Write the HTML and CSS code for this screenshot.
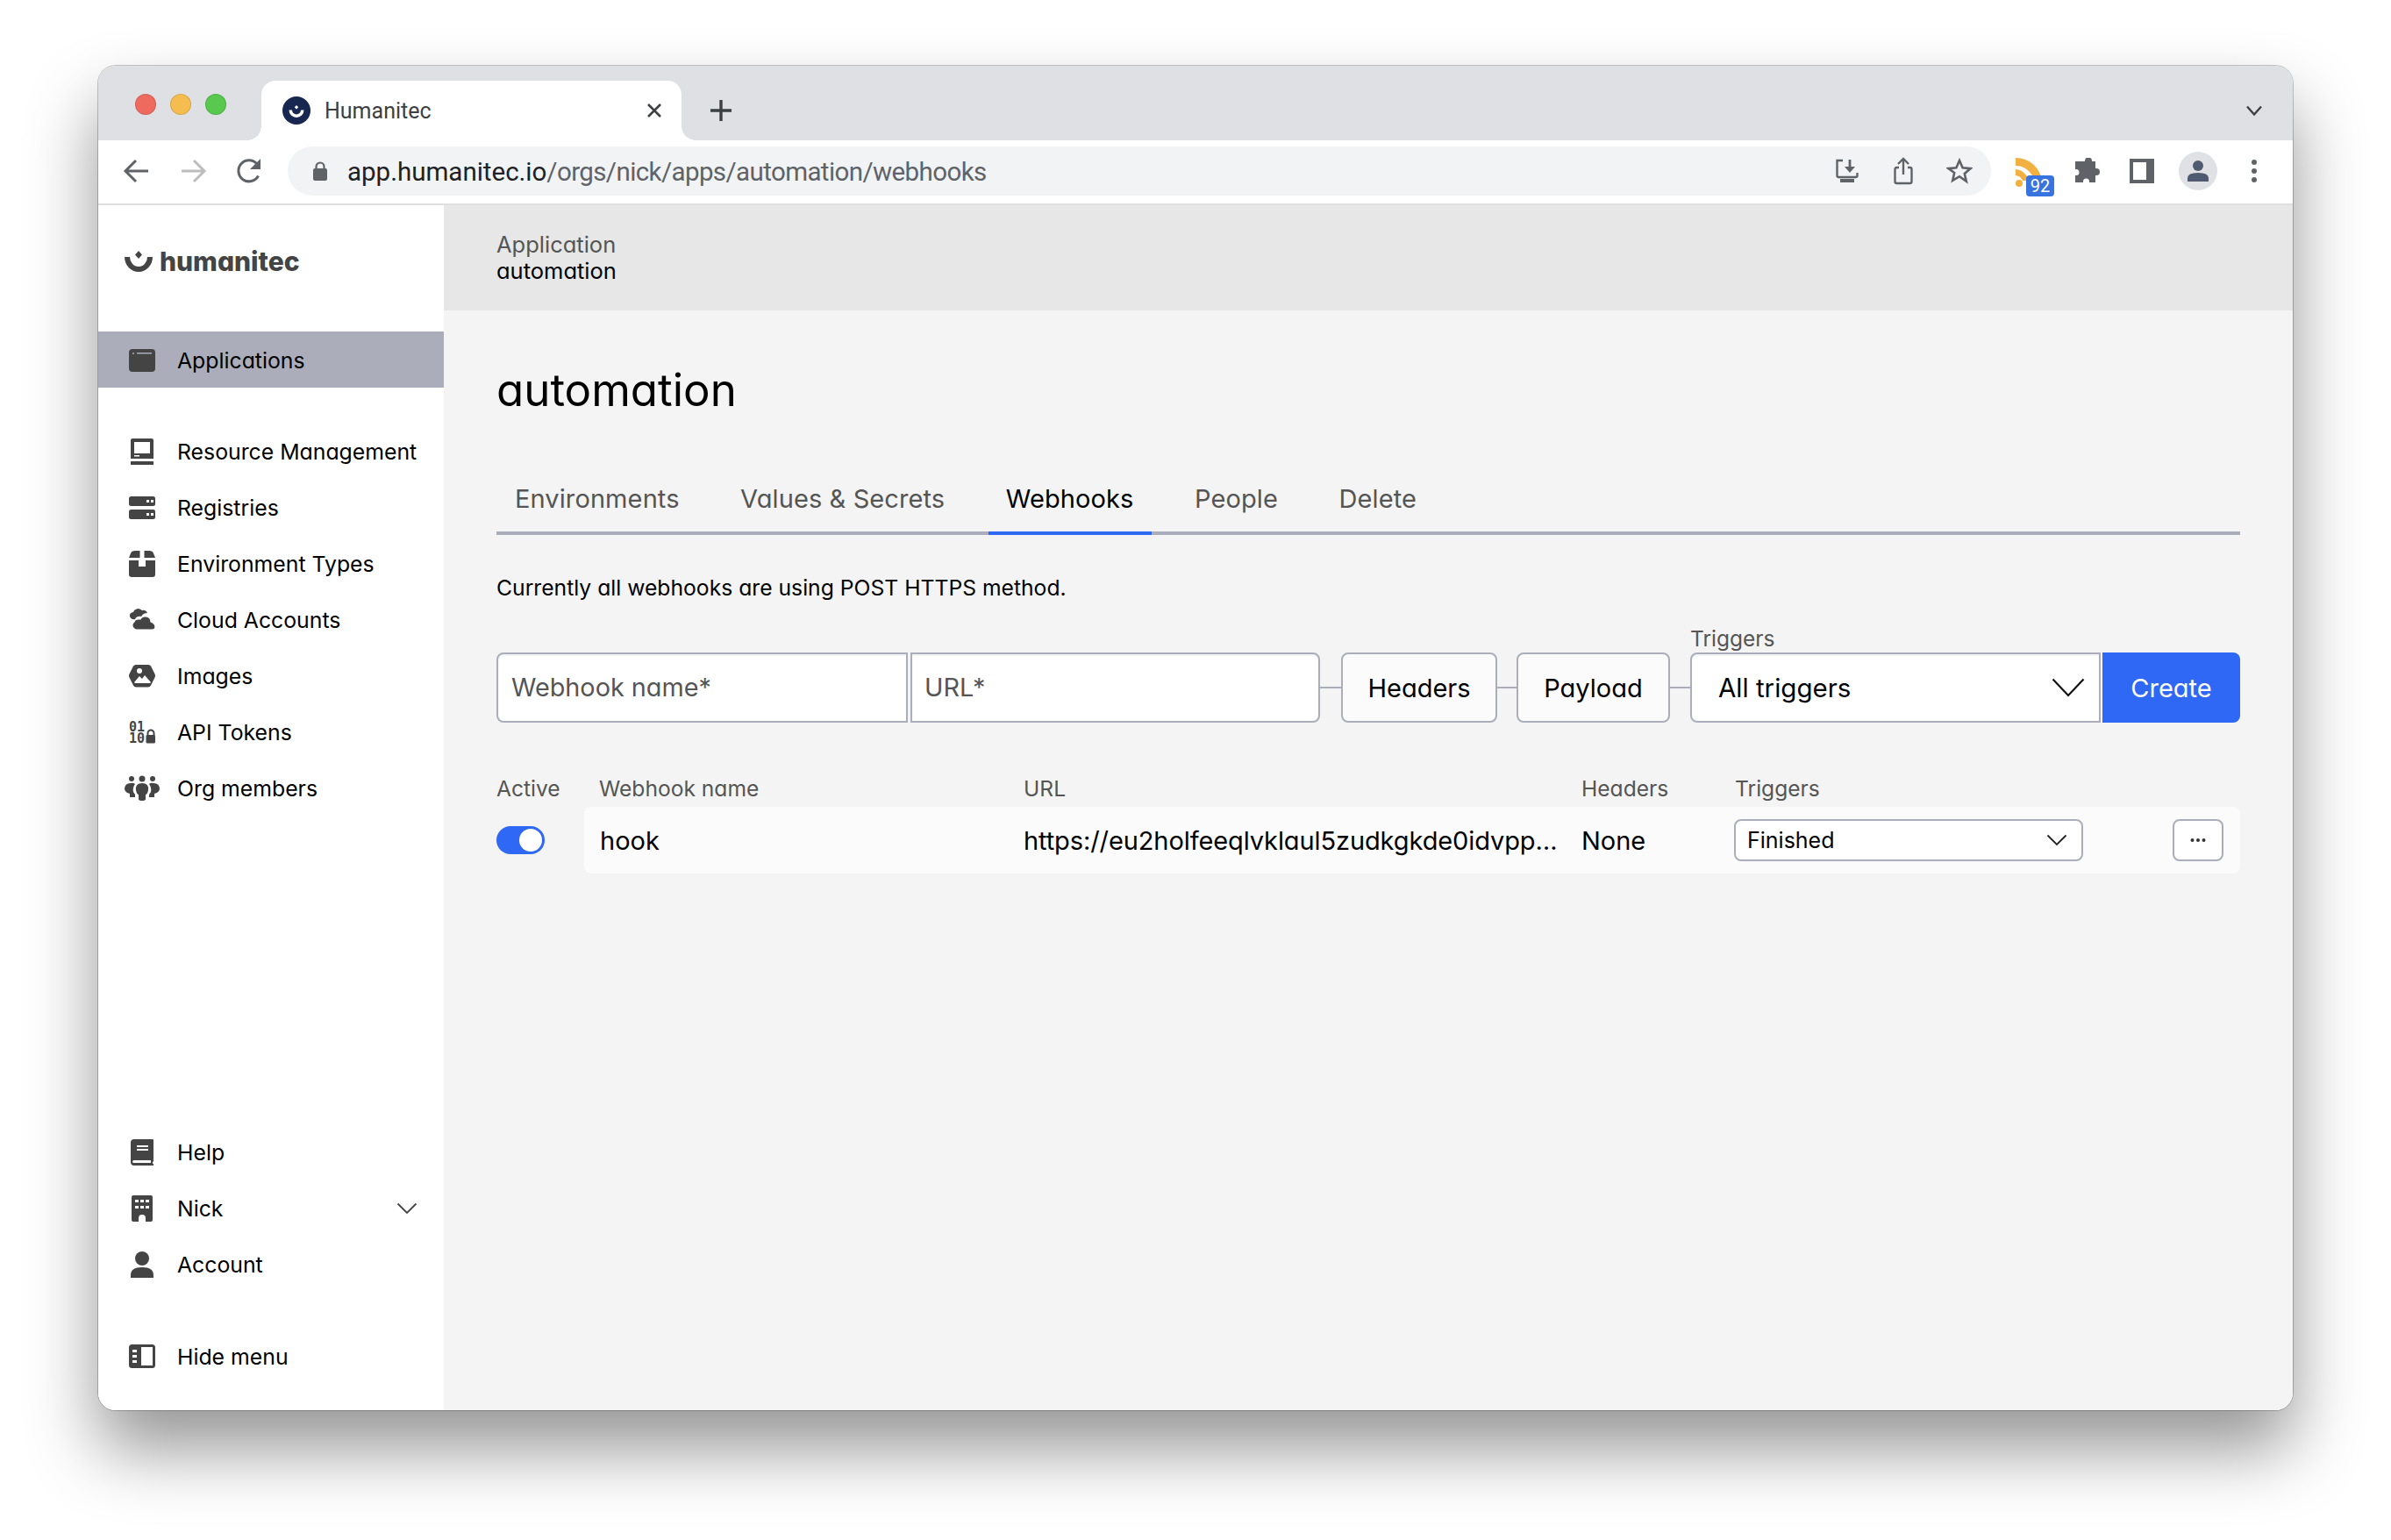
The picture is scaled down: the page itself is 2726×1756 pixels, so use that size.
FILE: index.html
```html
<!DOCTYPE html>
<html lang="en">
<head>
    <meta charset="UTF-8">
    <meta name="viewport" content="width=device-width, initial-scale=1.0">
    <title>Humanitec</title>
    <link rel="stylesheet" href="styles.css">
</head>
<body>
    <div class="window">
        <div class="tabstrip">
            <div class="lights">
                <span class="light red"></span>
                <span class="light yellow"></span>
                <span class="light green"></span>
            </div>
            <div class="tab">
                <svg class="favicon" width="32" height="32" viewBox="0 0 32 32">
                    <circle cx="16" cy="16" r="16" fill="#18274f"/>
                    <path d="M7.500 15.500a8.500 8.500 0 0 0 17 0l-3.500 0a5 5 0 0 1-10 0z" fill="#fff"/>
                    <path d="M16 10l2.200 2.200-2.200 2.200-2.200-2.200z" fill="#fff"/>
                </svg>
                <span class="tab-title">Humanitec</span>
                <svg class="tab-close" width="18" height="18" viewBox="0 0 18 18"><path d="M2 2l14 14M16 2L2 16" stroke="#3c4043" stroke-width="2.600"/></svg>
            </div>
            <svg class="new-tab" width="24" height="24" viewBox="0 0 24 24"><path d="M12 0v24M0 12h24" stroke="#3c4043" stroke-width="3.400"/></svg>
            <svg class="strip-chevron" width="20" height="12" viewBox="0 0 20 12"><path d="M2 1.500l8 9 8-9" fill="none" stroke="#3c4043" stroke-width="2.400"/></svg>
        </div>

        <div class="toolbar">
            <div class="nav-btns">
                <svg width="36" height="36" viewBox="0 0 36 36"><path d="M31 18H6M17 6L5 18l12 12" fill="none" stroke="#5f6368" stroke-width="3"/></svg>
                <svg width="36" height="36" viewBox="0 0 36 36"><path d="M5 18h25M19 6l12 12-12 12" fill="none" stroke="#bdbdbd" stroke-width="3"/></svg>
                <svg width="36" height="36" viewBox="0 0 36 36"><path d="M28.500 23.500A12 12 0 1 1 27 10" fill="none" stroke="#5f6368" stroke-width="3"/><path d="M31 4v12H19z" fill="#5f6368"/></svg>
            </div>
            <div class="omnibox">
                <svg class="lock" width="18" height="22" viewBox="0 0 18 22"><path d="M4.500 9V6a4.500 4.500 0 0 1 9 0v3" fill="none" stroke="#5f6368" stroke-width="2.200"/><rect x="1" y="8" width="16" height="14" rx="2" fill="#5f6368"/></svg>
                <span class="url"><span class="host">app.humanitec.io</span>/orgs/nick/apps/automation/webhooks</span>
                <div class="omni-actions">
                    <svg width="30" height="30" viewBox="0 0 30 30"><path d="M10 3H3.500v17q0 2 2 2h19q2 0 2-2v-3" fill="none" stroke="#5f6368" stroke-width="2.400"/><path d="M18 2v11" stroke="#5f6368" stroke-width="2.800"/><path d="M12 10l6 7 6-7z" fill="#5f6368"/><path d="M7 24h16v4H7z" fill="#5f6368"/></svg>
                    <svg width="24" height="32" viewBox="0 0 24 32"><path d="M7 12H4.500q-2 0-2 2v14q0 2 2 2h15q2 0 2-2V14q0-2-2-2H17" fill="none" stroke="#5f6368" stroke-width="2.400"/><path d="M12 2v18" stroke="#5f6368" stroke-width="2.400"/><path d="M6 8l6-6 6 6" fill="none" stroke="#5f6368" stroke-width="2.400"/></svg>
                    <svg width="30" height="30" viewBox="0 0 30 30"><path d="M15 3l3.600 8.200 8.900.9-6.700 5.900 2 8.800L15 21.200l-7.800 4.600 2-8.800L2.500 12.100l8.900-.9z" fill="none" stroke="#5f6368" stroke-width="2.600"/></svg>
                </div>
            </div>
            <div class="ext-icons">
                <div class="rss">
                    <svg width="32" height="34" viewBox="0 0 32 34"><path d="M0 0a30 30 0 0 1 30 26H21A21 21 0 0 0 0 9z" fill="#f2b040"/><path d="M0 13a17 17 0 0 1 15 13H8a10 10 0 0 0-8-6z" fill="#f2b040"/><circle cx="4" cy="29" r="4" fill="#f2b040"/></svg>
                    <span class="rss-badge">92</span>
                </div>
                <svg class="puzzle" width="30" height="30" viewBox="0 0 30 30"><path d="M10 4h4V3.500a4 4 0 0 1 8 0V4h4v8h1a4 4 0 0 1 0 8h-1v8h-7v-1a3.500 3.500 0 0 0-7 0v1H3v-8h1a3.500 3.500 0 0 0 0-7H3V4z" fill="#5f6368" transform="translate(-1 0)"/></svg>
                <svg class="panel" width="28" height="28" viewBox="0 0 28 28"><path d="M0 0h28v28H0z" fill="#5f6368"/><path d="M4 4h15v20H4z" fill="#fff"/></svg>
                <div class="avatar">
                    <svg width="26" height="26" viewBox="0 0 26 26"><circle cx="13" cy="7" r="6" fill="#4f5b70"/><path d="M1 25v-4q0-6 12-6t12 6v4z" fill="#4f5b70"/></svg>
                </div>
                <svg class="kebab" width="8" height="28" viewBox="0 0 8 28"><circle cx="4" cy="4" r="3" fill="#5f6368"/><circle cx="4" cy="14" r="3" fill="#5f6368"/><circle cx="4" cy="24" r="3" fill="#5f6368"/></svg>
            </div>
        </div>

        <div class="app">
            <aside class="sidebar">
                <div class="sidebar-top">
                    <div class="logo">
                        <svg width="32" height="26" viewBox="0 0 32 26"><path d="M0 8a16 17 0 0 0 32 0h-6a10 11 0 0 1-20 0z" fill="#444"/><path d="M16 1l4 4.500-4 4.500-4-4.500z" fill="#444"/></svg>
                        <span>humanitec</span>
                    </div>
                    <a class="nav-item active">
                        <svg class="nav-icon" viewBox="0 0 30 30"><rect y="2" width="30" height="26" rx="4" fill="#444"/><circle cx="5" cy="7" r="1" fill="#abaeba"/><path d="M9 6h17v1.500H9z" fill="#abaeba"/></svg>
                        Applications
                    </a>
                    <nav class="nav-group">
                        <a class="nav-item">
                            <svg class="nav-icon" viewBox="0 0 30 30"><path d="M4 0h22a2 2 0 0 1 2 2v21H2V2a2 2 0 0 1 2-2z" fill="#444"/><path d="M6 4h18v13H6zM6 19h6v1.500H6z" fill="#fff"/><path d="M2 26h26v4H2z" fill="#444"/></svg>
                            Resource Management
                        </a>
                        <a class="nav-item">
                            <svg class="nav-icon" viewBox="0 0 30 30"><rect y="2" width="30" height="11" rx="2.500" fill="#444"/><rect y="17" width="30" height="11" rx="2.500" fill="#444"/><path d="M20 6h3v3h-3zM25 6h3v3h-3zM20 21h3v3h-3zM25 21h3v3h-3z" fill="#fff"/></svg>
                            Registries
                        </a>
                        <a class="nav-item">
                            <svg class="nav-icon" viewBox="0 0 30 30"><path d="M7 0h5.500v8H0l2-5q1-3 5-3zM17.500 0H23q4 0 5 3l2 5H17.500z" fill="#444"/><path d="M0 11h11v7h8v-7h11v16a3 3 0 0 1-3 3H3a3 3 0 0 1-3-3z" fill="#444"/></svg>
                            Environment Types
                        </a>
                        <a class="nav-item">
                            <svg class="nav-icon" viewBox="0 0 30 30"><path d="M1 11a4 4 0 0 1 4-5 6 6 0 0 1 10-2q4-1 6 3-5 0-7 4-5-1-7 3-4 1-6-3z" fill="#444"/><path d="M8 26a5 5 0 0 1-2-9q1-4 7-3 2-4 7-3 5 1 5 6 5 2 5 6 0 3-3 3z" fill="#444" stroke="#fff" stroke-width="1.200"/></svg>
                            Cloud Accounts
                        </a>
                        <a class="nav-item">
                            <svg class="nav-icon" viewBox="0 0 30 30"><path d="M8 2h14q2 0 3 1.500l4.500 9q1 2 0 4l-4.500 9q-1 2-3 2H8q-2 0-3-2l-4.500-9q-1-2 0-4l4.500-9Q6 2 8 2z" fill="#444"/><circle cx="12" cy="9" r="3" fill="#fff"/><path d="M6 22l6-7 3 3 3-4 7 8-1 1H7z" fill="#fff"/></svg>
                            Images
                        </a>
                        <a class="nav-item">
                            <svg class="nav-icon" viewBox="0 0 30 30">
                                <text class="bits" x="0" y="14">01</text>
                                <text class="bits" x="0" y="27">10</text>
                                <path d="M21.500 19v-3a3.500 3.500 0 0 1 7 0v3" fill="none" stroke="#444" stroke-width="2"/>
                                <rect x="19.500" y="18" width="10.500" height="9.500" rx="1.500" fill="#444"/>
                            </svg>
                            API Tokens
                        </a>
                        <a class="nav-item">
                            <svg class="nav-icon wide" viewBox="0 0 40 30"><circle cx="8" cy="4" r="3" fill="#444"/><circle cx="20" cy="4" r="3.500" fill="#444"/><circle cx="32" cy="4" r="3" fill="#444"/><path d="M20 9q8 0 7 8-1 5-3 5v5q0 2-4 2t-4-2v-5q-2 0-3-5-1-8 7-8z" fill="#444"/><path d="M7 9q3-1 5 1-3 4-2 9l2 3v3H6v-4q-5-1-6-5 0-7 7-7zM33 9q-3-1-5 1 3 4 2 9l-2 3v3h6v-4q5-1 6-5 0-7-7-7z" fill="#444"/></svg>
                            Org members
                        </a>
                    </nav>
                </div>
                <div class="sidebar-bottom">
                    <a class="nav-item">
                        <svg class="nav-icon" viewBox="0 0 30 30"><path d="M6 0h21a1 1 0 0 1 1 1v24l-1 1v2h1v2H6a4 4 0 0 1-4-4V4a4 4 0 0 1 4-4z" fill="#444"/><path d="M9 7h13v2H9zM9 11h13v2H9z" fill="#fff"/><path d="M6 24h19v3H6q-2 0-2-1.500T6 24z" fill="#fff"/></svg>
                        Help
                    </a>
                    <a class="nav-item">
                        <svg class="nav-icon" viewBox="0 0 30 30"><path d="M5 0h20a2 2 0 0 1 2 2v26a2 2 0 0 1-2 2h-6v-4a4 4 0 0 0-8 0v4H5a2 2 0 0 1-2-2V2a2 2 0 0 1 2-2z" fill="#444"/><path d="M7 5h4v3H7zM13 5h4v3h-4zM19 5h4v3h-4zM7 12h4v3H7zM13 12h4v3h-4zM19 12h4v3h-4z" fill="#fff"/></svg>
                        Nick
                        <svg class="nav-chevron" width="24" height="14" viewBox="0 0 24 14"><path d="M1.500 1.500L12 12 22.500 1.500" fill="none" stroke="#444" stroke-width="1.800"/></svg>
                    </a>
                    <a class="nav-item">
                        <svg class="nav-icon" viewBox="0 0 30 30"><circle cx="15" cy="8" r="8" fill="#444"/><path d="M2 30v-3q0-9 13-9t13 9v3z" fill="#444"/></svg>
                        Account
                    </a>
                    <a class="nav-item hide-menu">
                        <svg class="nav-icon" viewBox="0 0 30 30"><rect y="1" width="30" height="27" rx="3.500" fill="#444"/><path d="M14 4h13v21H14zM4 7h5v3H4zM4 13h5v3H4zM4 19h5v3H4z" fill="#fff"/></svg>
                        Hide menu
                    </a>
                </div>
            </aside>

            <main class="main">
                <header class="crumbs">
                    <div class="crumb-label">Application</div>
                    <div class="crumb-value">automation</div>
                </header>
                <div class="content">
                    <h1 class="title">automation</h1>
                    <div class="tabs">
                        <a class="page-tab">Environments</a>
                        <a class="page-tab">Values &amp; Secrets</a>
                        <a class="page-tab current">Webhooks</a>
                        <a class="page-tab">People</a>
                        <a class="page-tab">Delete</a>
                    </div>
                    <p class="note">Currently all webhooks are using POST HTTPS method.</p>

                    <div class="form-row">
                        <input class="field name-field" placeholder="Webhook name*">
                        <input class="field url-field" placeholder="URL*">
                        <span class="link-line"></span>
                        <button class="ghost-btn headers-btn">Headers</button>
                        <span class="link-line short"></span>
                        <button class="ghost-btn payload-btn">Payload</button>
                        <span class="link-line mid"></span>
                        <div class="select-wrap">
                            <label class="select-label">Triggers</label>
                            <div class="select big-select">
                                All triggers
                                <svg width="38" height="22" viewBox="0 0 38 22"><path d="M1.500 1.500L19 20 36.500 1.500" fill="none" stroke="#111" stroke-width="2.200"/></svg>
                            </div>
                        </div>
                        <button class="create-btn">Create</button>
                    </div>

                    <div class="table-head">
                        <span>Active</span>
                        <span>Webhook name</span>
                        <span>URL</span>
                        <span>Headers</span>
                        <span>Triggers</span>
                    </div>
                    <div class="table-row">
                        <div class="toggle"><span class="knob"></span></div>
                        <div class="row-card">
                            <span class="cell-name">hook</span>
                            <span class="cell-url">https://eu2holfeeqlvklaul5zudkgkde0idvpp…</span>
                            <span class="cell-headers">None</span>
                            <div class="select row-select">
                                Finished
                                <svg width="24" height="14" viewBox="0 0 24 14"><path d="M1.500 1.500L12 12 22.500 1.500" fill="none" stroke="#222" stroke-width="1.800"/></svg>
                            </div>
                            <button class="more-btn">
                                <svg width="18" height="4" viewBox="0 0 18 4"><circle cx="2.500" cy="2" r="2" fill="#333"/><circle cx="9" cy="2" r="2" fill="#333"/><circle cx="15.500" cy="2" r="2" fill="#333"/></svg>
                            </button>
                        </div>
                    </div>
                </div>
            </main>
        </div>
    </div>
</body>
</html>
```

FILE: styles.css
```css
* {
    box-sizing: border-box;
}
body {
    margin: 0;
    padding: 75px 112px 0;
    height: 1756px;
    overflow: hidden;
    background: #fff;
    font-family: Inter, "Noto Sans", sans-serif;
    font-feature-settings: "cv11";
    color: #000;
}
svg {
    display: block;
    flex: none;
}

/* browser chrome */
body::before {
    content: "";
    position: absolute;
    left: 112px;
    top: 75px;
    width: 2502px;
    height: 1533px;
    border-radius: 20px;
    box-shadow: 0 44px 80px rgba(0, 0, 0, 0.42);
}
.window {
    position: relative;
    width: 2502px;
    height: 1533px;
    display: flex;
    flex-direction: column;
    border-radius: 20px;
    overflow: hidden;
    background: #fff;
    box-shadow: 0 0 0 1px rgba(0, 0, 0, 0.22);
}
.tabstrip {
    height: 85px;
    flex: none;
    display: flex;
    align-items: flex-start;
    padding-top: 17px;
    background: #dfe0e4;
}
.lights {
    display: flex;
    gap: 16px;
    margin: 15px 40px 0 42px;
}
.light {
    width: 24px;
    height: 24px;
    border-radius: 50%;
    border: 1px solid rgba(0, 0, 0, 0.12);
}
.red { background: #ee6a5f; }
.yellow { background: #f5bd4f; }
.green { background: #58c84f; }
.tab {
    position: relative;
    width: 479px;
    height: 68px;
    display: flex;
    align-items: center;
    padding: 0 22px 0 24px;
    background: #fff;
    border-radius: 16px 16px 0 0;
    font-family: Roboto, sans-serif;
    font-feature-settings: normal;
}
.tab::before,
.tab::after {
    content: "";
    position: absolute;
    bottom: 0;
    width: 16px;
    height: 16px;
}
.tab::before {
    left: -16px;
    background: radial-gradient(circle at 0 0, #dfe0e4 15.5px, #fff 16px);
}
.tab::after {
    right: -16px;
    background: radial-gradient(circle at 100% 0, #dfe0e4 15.5px, #fff 16px);
}
.tab-title {
    margin-left: 16px;
    font-size: 25px;
    color: #3c4043;
}
.tab-close {
    margin-left: auto;
}
.new-tab {
    margin: 22px 0 0 33px;
}
.strip-chevron {
    margin: 28px 34px 0 auto;
}
.toolbar {
    height: 74px;
    flex: none;
    display: flex;
    align-items: center;
    padding: 0 0 2px 26px;
    background: #fff;
    border-bottom: 2px solid #dedfe1;
}
.nav-btns {
    display: flex;
    gap: 28px;
    margin-right: 26px;
}
.omnibox {
    width: 1942px;
    height: 56px;
    flex: none;
    display: flex;
    align-items: center;
    padding: 0 21px 0 28px;
    border-radius: 28px;
    background: #f1f3f4;
    font-family: Roboto, sans-serif;
    font-feature-settings: normal;
}
.url {
    margin: 2px 0 0 22px;
    font-size: 29.5px;
    letter-spacing: -0.6px;
    color: #5f6368;
    white-space: nowrap;
}
.host {
    color: #202124;
    letter-spacing: 0;
}
.omni-actions {
    margin-left: auto;
    display: flex;
    align-items: center;
    gap: 37px;
}
.ext-icons {
    display: flex;
    align-items: center;
    margin-left: 28px;
}
.rss {
    position: relative;
    width: 48px;
    height: 44px;
    padding-top: 7px;
}
.rss-badge {
    position: absolute;
    left: 12px;
    top: 27px;
    width: 32px;
    height: 24px;
    display: flex;
    align-items: center;
    justify-content: center;
    border-radius: 4px;
    background: #3874e0;
    color: #fff;
    font-family: Roboto, sans-serif;
    font-size: 20px;
}
.puzzle {
    margin-left: 18px;
}
.panel {
    margin-left: 34px;
}
.avatar {
    width: 44px;
    height: 44px;
    margin-left: 28px;
    display: flex;
    align-items: center;
    justify-content: center;
    border-radius: 50%;
    background: #dfe1e5;
}
.kebab {
    margin-left: 38px;
}

/* app */
.app {
    flex: 1;
    display: flex;
    min-height: 0;
}
.sidebar {
    width: 394px;
    flex: none;
    display: flex;
    flex-direction: column;
    justify-content: space-between;
    padding-bottom: 29px;
    background: #fff;
}
.logo {
    height: 144px;
    display: flex;
    align-items: center;
    gap: 8px;
    padding: 0 0 16px 30px;
    font-size: 30px;
    font-weight: 800;
    color: #444;
}
.nav-group {
    margin-top: 41px;
}
.nav-item {
    height: 64px;
    display: flex;
    align-items: center;
    gap: 25px;
    padding: 0 30px 0 35px;
    font-size: 24.8px;
    white-space: nowrap;
    color: #000;
}
.nav-item.active {
    padding-top: 1px;
    background: #abaeba;
}
.nav-icon {
    width: 30px;
    height: 30px;
}
.nav-icon.wide {
    width: 40px;
    margin: 0 -5px;
}
.bits {
    font-family: "DejaVu Sans Mono", monospace;
    font-size: 15px;
    font-weight: 700;
    fill: #444;
}
.nav-chevron {
    margin-left: auto;
}
.hide-menu {
    margin-top: 41px;
}
.main {
    flex: 1;
    min-width: 0;
    display: flex;
    flex-direction: column;
    background: #f4f4f4;
}
.crumbs {
    height: 120px;
    flex: none;
    padding: 30px 60px 0;
    background: #e7e7e7;
    font-size: 25.5px;
    line-height: 30px;
}
.crumb-label {
    color: #555;
}
.content {
    flex: 1;
    padding: 0 60px;
}
.title {
    margin: 59px 0 0;
    font-size: 51px;
    line-height: 64px;
    font-weight: 400;
}
.tabs {
    display: flex;
    gap: 29.5px;
    height: 89px;
    margin-top: 44px;
    padding-left: 1px;
    border-bottom: 4px solid #abaeba;
}
.page-tab {
    height: 89px;
    display: flex;
    align-items: center;
    padding: 10px 20px 0;
    font-size: 29px;
    letter-spacing: 0.1px;
    color: #555;
    border-bottom: 4px solid transparent;
}
.page-tab.current {
    color: #000;
    border-bottom-color: #2f68f5;
}
.note {
    margin: 42px 0 0;
    font-size: 24.7px;
    line-height: 36px;
}
.form-row {
    display: flex;
    align-items: center;
    margin-top: 56px;
    height: 80px;
}
.field {
    height: 80px;
    padding: 0 15px 2px;
    border: 2px solid #abaeba;
    background: #fff;
    box-shadow: inset 0 2px 2px rgba(0, 0, 0, 0.05);
    font-family: inherit;
    font-feature-settings: inherit;
    font-size: 28.8px;
    outline: none;
}
.field::placeholder {
    color: #555;
    opacity: 1;
}
.name-field {
    width: 469px;
    border-radius: 8px 0 0 8px;
}
.url-field {
    width: 467px;
    margin-left: 3px;
    padding-left: 14px;
    border-radius: 0 8px 8px 0;
}
.link-line {
    width: 24px;
    height: 2px;
    background: #abaeba;
}
.link-line.short {
    width: 22px;
}
.link-line.mid {
    width: 23px;
}
.ghost-btn {
    height: 80px;
    border: 2px solid #abaeba;
    border-radius: 8px;
    background: #fbfbfb;
    font-family: inherit;
    font-feature-settings: inherit;
    font-size: 29px;
    color: #000;
}
.headers-btn {
    width: 178px;
}
.payload-btn {
    width: 175px;
}
.select-wrap {
    position: relative;
    width: 468px;
}
.select-label {
    position: absolute;
    left: 0;
    top: -31px;
    font-size: 24.5px;
    color: #555;
}
.select {
    display: flex;
    align-items: center;
    justify-content: space-between;
    border: 2px solid #abaeba;
    background: #fff;
}
.big-select {
    height: 80px;
    padding: 0 16px 0 30px;
    border-radius: 8px 0 0 8px;
    box-shadow: inset 0 2px 2px rgba(0, 0, 0, 0.05);
    font-size: 29.5px;
}
.create-btn {
    width: 157px;
    height: 80px;
    margin-left: 2px;
    border: 0;
    border-radius: 0 8px 8px 0;
    background: #2f68f5;
    color: #fff;
    font-family: inherit;
    font-feature-settings: inherit;
    font-size: 29px;
}

/* webhook table */
.table-head {
    display: grid;
    grid-template-columns: 117px 484px 636px 175px 1fr;
    margin: 56px 0 2px;
    height: 38px;
    align-items: center;
    font-size: 24.6px;
    color: #555;
}
.table-row {
    display: flex;
    align-items: center;
}
.toggle {
    width: 55px;
    height: 32px;
    flex: none;
    display: flex;
    align-items: center;
    justify-content: flex-end;
    padding-right: 3px;
    margin-right: 45px;
    border-radius: 16px;
    background: #2f68f5;
}
.knob {
    width: 26px;
    height: 26px;
    border-radius: 50%;
    background: #fff;
}
.row-card {
    flex: 1;
    min-width: 0;
    height: 76px;
    display: grid;
    grid-template-columns: 501px 636px 174px 398px 1fr;
    align-items: center;
    border-radius: 8px;
    background: #fbfbfb;
    font-size: 29px;
}
.cell-name {
    padding-left: 18px;
}
.cell-url {
    letter-spacing: -0.1px;
    white-space: nowrap;
}
.row-select {
    height: 48px;
    padding: 0 16px 0 13px;
    border-radius: 8px;
    font-size: 25px;
}
.more-btn {
    width: 58px;
    height: 48px;
    margin-left: 102px;
    display: flex;
    align-items: center;
    justify-content: center;
    padding: 0;
    border: 2px solid #abaeba;
    border-radius: 8px;
    background: #fff;
}
```
